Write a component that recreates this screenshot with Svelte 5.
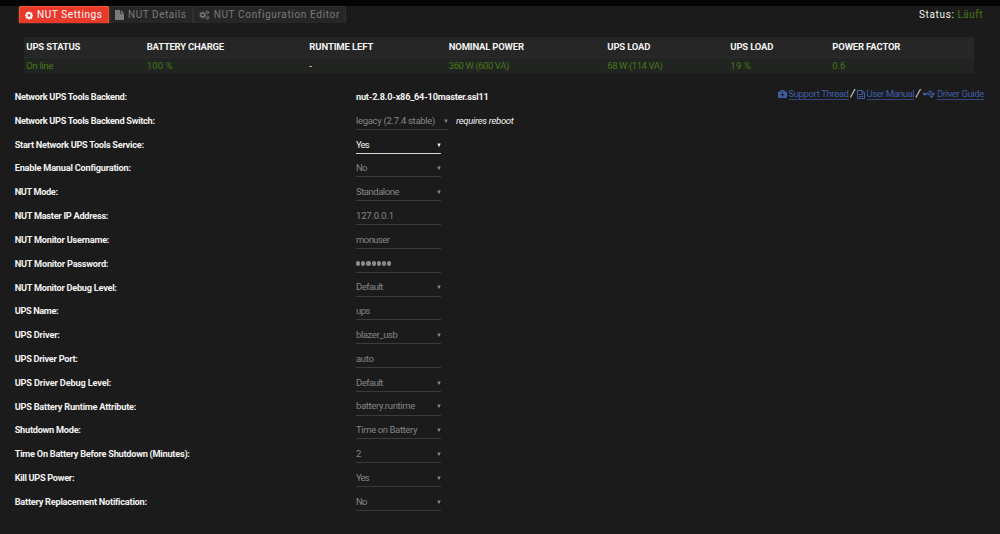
<script>
  const stats = [
    { title: 'UPS STATUS', value: 'On line', tw: 54, vw: 27, col: 120.5 },
    { title: 'BATTERY CHARGE', value: '100 %', tw: 77, vw: 26, col: 162.5 },
    { title: 'RUNTIME LEFT', value: '-', tw: 64, vw: 4, col: 139.5, plain: true },
    { title: 'NOMINAL POWER', value: '360 W (600 VA)', tw: 75, vw: 60, col: 158.5 },
    { title: 'UPS LOAD', value: '68 W (114 VA)', tw: 43, vw: 55, col: 123 },
    { title: 'UPS LOAD', value: '19 %', tw: 43, vw: 21, col: 102 },
    { title: 'POWER FACTOR', value: '0.6', tw: 68, vw: 13, col: 142 }
  ];

  const rows = [
    { label: 'Network UPS Tools Backend Switch:', lw: 140, value: 'legacy (2.7.4 stable)', vw: 79, kind: 'select', wide: true },
    { label: 'Start Network UPS Tools Service:', lw: 129, value: 'Yes', vw: 13, kind: 'select', on: true },
    { label: 'Enable Manual Configuration:', lw: 116, value: 'No', vw: 10.5, kind: 'select' },
    { label: 'NUT Mode:', lw: 43, value: 'Standalone', vw: 43, kind: 'select' },
    { label: 'NUT Master IP Address:', lw: 93.5, value: '127.0.0.1', vw: 38, kind: 'text' },
    { label: 'NUT Monitor Username:', lw: 94.5, value: 'monuser', vw: 33.5, kind: 'text' },
    { label: 'NUT Monitor Password:', lw: 93.5, value: '', vw: 36, kind: 'password' },
    { label: 'NUT Monitor Debug Level:', lw: 102, value: 'Default', vw: 27, kind: 'select' },
    { label: 'UPS Name:', lw: 43.5, value: 'ups', vw: 14, kind: 'text' },
    { label: 'UPS Driver:', lw: 45, value: 'blazer_usb', vw: 41.5, kind: 'select' },
    { label: 'UPS Driver Port:', lw: 63, value: 'auto', vw: 17.5, kind: 'text' },
    { label: 'UPS Driver Debug Level:', lw: 96.5, value: 'Default', vw: 27, kind: 'select' },
    { label: 'UPS Battery Runtime Attribute:', lw: 121.5, value: 'battery.runtime', vw: 59, kind: 'select' },
    { label: 'Shutdown Mode:', lw: 66, value: 'Time on Battery', vw: 61, kind: 'select' },
    { label: 'Time On Battery Before Shutdown (Minutes):', lw: 175, value: '2', vw: 5, kind: 'select' },
    { label: 'Kill UPS Power:', lw: 59.5, value: 'Yes', vw: 13, kind: 'select' },
    { label: 'Battery Replacement Notification:', lw: 132, value: 'No', vw: 10.5, kind: 'select' }
  ];

  // Tracks a run of text so that it fills the given width.
  function fit(node, width) {
    const natural = node.getBoundingClientRect().width;
    node.style.letterSpacing = (width - natural) / node.textContent.length + 'px';
  }
</script>

<div class="page">
  <header>
    <nav>
      <div class="tab active">
        <svg width="9" height="9" viewBox="0 0 16 16"><path fill="currentColor" fill-rule="evenodd" d="M6.6 0h2.8l.5 2 1.2.5 1.9-1.1 2 2-1.1 1.8.5 1.3 1.9.4v2.8l-2 .5-.5 1.2 1.1 1.9-2 2-1.8-1.1-1.3.5-.4 1.3H6.6l-.5-2-1.2-.5L3 14.6l-2-2 1.1-1.8-.5-1.3L0 9.1V6.6l2-.5.5-1.2L1.4 3l2-2 1.8 1.1 1.3-.5zM8 5.2a2.8 2.8 0 1 0 0 5.6 2.8 2.8 0 0 0 0-5.6z" /></svg>
        <span use:fit={65.5}>NUT Settings</span>
      </div>
      <div class="tab second">
        <svg width="9" height="10" viewBox="0 0 9 10"><path fill="currentColor" d="M0 0h5v3.600h4V10H0zM5.800 0 9 3H5.800z" /></svg>
        <span use:fit={58.5}>NUT Details</span>
      </div>
      <div class="tab third">
        <svg width="11" height="10" viewBox="0 0 22 20"><g fill="none" stroke="currentColor"><circle cx="7.500" cy="10" r="4" stroke-width="3" /><circle cx="7.500" cy="10" r="6.200" stroke-width="2" stroke-dasharray="2.600 2.270" /><circle cx="17.500" cy="4.500" r="2.200" stroke-width="2" /><circle cx="17.500" cy="4.500" r="3.600" stroke-width="1.400" stroke-dasharray="1.600 1.200" /><circle cx="17.500" cy="15.500" r="2.200" stroke-width="2" /><circle cx="17.500" cy="15.500" r="3.600" stroke-width="1.400" stroke-dasharray="1.600 1.200" /></g></svg>
        <span use:fit={126}>NUT Configuration Editor</span>
      </div>
    </nav>
    <div class="state"><span use:fit={35.5}>Status:</span><span class="green" use:fit={25.5}>Läuft</span></div>
  </header>

  <section class="stats">
    <div class="line head">
      {#each stats as s}
        <div class="cell" style="width:{s.col}px"><span use:fit={s.tw}>{s.title}</span></div>
      {/each}
    </div>
    <div class="line body">
      {#each stats as s}
        <div class="cell" class:plain={s.plain} style="width:{s.col}px"><span use:fit={s.vw}>{s.value}</span></div>
      {/each}
    </div>
  </section>

  <main>
    <div class="row">
      <div class="label"><span use:fit={112}>Network UPS Tools Backend:</span></div>
      <div class="version"><span use:fit={132.5}>nut-2.8.0-x86_64-10master.ssl11</span></div>
      <div class="links">
        <svg width="9" height="8" viewBox="0 0 18 16"><path fill="currentColor" fill-rule="evenodd" d="M5 3V1.5Q5 0 6.500 0h5Q13 0 13 1.500V3h3q2 0 2 2v9q0 2-2 2H2q-2 0-2-2V5q0-2 2-2zm2 0h4V2H7zm.8 3v2.300H5.500v2.400h2.300V13h2.400v-2.300h2.300V8.300h-2.300V6z" /></svg>
        <a href="#support"><span use:fit={60}>Support Thread</span></a>
        <i class="slash">/</i>
        <svg class="doc" width="8" height="9" viewBox="0 0 8 9"><path fill="none" stroke="currentColor" d="M.5.5h4.700l2.300 2.300v5.700h-7zM5 .5V3h2.500M2 4.500h4M2 6.500h4" /></svg>
        <a href="#manual"><span use:fit={47.5}>User Manual</span></a>
        <i class="slash">/</i>
        <svg class="usb" width="12" height="8" viewBox="0 0 24 16"><g fill="none" stroke="currentColor" stroke-width="2"><path d="M3 8h18M6 8c4 0 3-5 7-5h2M9 8c4 0 3 5 7 5h2" /></g><g fill="currentColor"><circle cx="3" cy="8" r="3" /><path d="m19 4 5 4-5 4z" /><circle cx="15" cy="3" r="2" /><path d="M16 11h4v4h-4z" /></g></svg>
        <a href="#driver"><span use:fit={47}>Driver Guide</span></a>
      </div>
    </div>
    {#each rows as r}
      <div class="row">
        <div class="label"><span use:fit={r.lw}>{r.label}</span></div>
        <div class="field" class:wide={r.wide} class:on={r.on}>
          {#if r.kind === 'password'}
            <div class="dots">{#each Array(7) as _}<b></b>{/each}</div>
          {:else}
            <span use:fit={r.vw}>{r.value}</span>
          {/if}
          {#if r.kind === 'select'}
            <svg class="arrow" width="4" height="4" viewBox="0 0 4 4"><path fill="currentColor" d="M.3.5h3.400L2.300 3.700h-.6z" /></svg>
          {/if}
        </div>
        {#if r.wide}<em><span use:fit={57.5}>requires reboot</span></em>{/if}
      </div>
    {/each}
  </main>
</div>

<style>
  :global(body) { background: #1b1b1b; }
  .page {
    box-sizing: border-box;
    width: 1000px;
    height: 534px;
    overflow: hidden;
    border-top: 6px solid #040406;
    background: #1b1b1b;
    color: #f2f2f2;
    font: 9.5px/12px Roboto, sans-serif;
    white-space: nowrap;
  }
  span { display: inline-block; white-space: pre; }
  header { display: flex; justify-content: space-between; height: 31px; padding: 0 17px 0 19px; }
  nav { display: flex; }
  .tab {
    box-sizing: border-box;
    display: flex;
    align-items: center;
    gap: 4px;
    height: 17px;
    padding: 0 5px 0;
    border: 1px solid #303030;
    border-bottom: 0;
    border-radius: 2px 2px 0 0;
    background: #262626;
    color: #7a7a7a;
    font-size: 10px;
  }
  .tab.active {
    width: 89.500px;
    padding-left: 4.500px;
    gap: 4.500px;
    border-color: #f15a2c;
    background: #e8392b;
    color: #fff;
    box-shadow: 0 0 2px #a85a48;
  }
  .second { width: 83px; margin-left: 1.500px; padding-left: 4px; }
  .third { width: 153px; }
  .state { display: flex; gap: 3px; padding-top: 3px; font-size: 10px; }
  .green { color: #457a17; }
  .stats { margin: 0 26px 0 24px; }
  .line { display: flex; align-items: center; padding-left: 2.300px; }
  .head { height: 20px; background: #262626; font-weight: 700; border-bottom: 1px solid #2b2b2b; }
  .head .cell { padding-bottom: 1px; }
  .body { height: 15px; background: #212421; color: #457a17; }
  .body .cell { padding-top: 1px; }
  .cell { box-sizing: border-box; flex: none; }
  .body .plain { color: #f2f2f2; }
  main { padding: 12px 15px 0; }
  .row { display: flex; align-items: flex-start; height: 23.820px; }
  .label { width: 341px; padding-top: 6px; margin-left: -.3px; margin-right: .3px; font-weight: 700; font-size: 9.2px; }
  .version { flex: 1; padding-top: 6px; font-weight: 700; font-size: 9.2px; }
  .field {
    box-sizing: border-box;
    display: flex;
    align-items: center;
    justify-content: space-between;
    width: 85px;
    height: 21px;
    padding-top: 3.800px;
    border-bottom: 1px solid #3b3b3b;
    color: #858585;
  }
  .field.wide { width: 92px; }
  .field.on { color: #f2f2f2; border-color: #d5d5d5; }
  .dots { display: flex; gap: 1px; }
  .dots b { width: 4.200px; height: 4.200px; border-radius: 50%; background: #8c8c8c; }
  em { margin-left: 8px; padding-top: 6px; }
  .links { display: flex; align-items: center; height: 12px; padding-top: 3px; margin-right: 1px; color: #3f5ea8; }
  .links a { margin-left: 2px; height: 11px; color: inherit; text-decoration: none; border-bottom: 1.500px solid #33477c; line-height: 11px; }
  .slash { width: 4px; margin: 0 2px; color: #f2f2f2; font-size: 11px; text-align: center; }
  .usb { margin-left: 1px; }
</style>
